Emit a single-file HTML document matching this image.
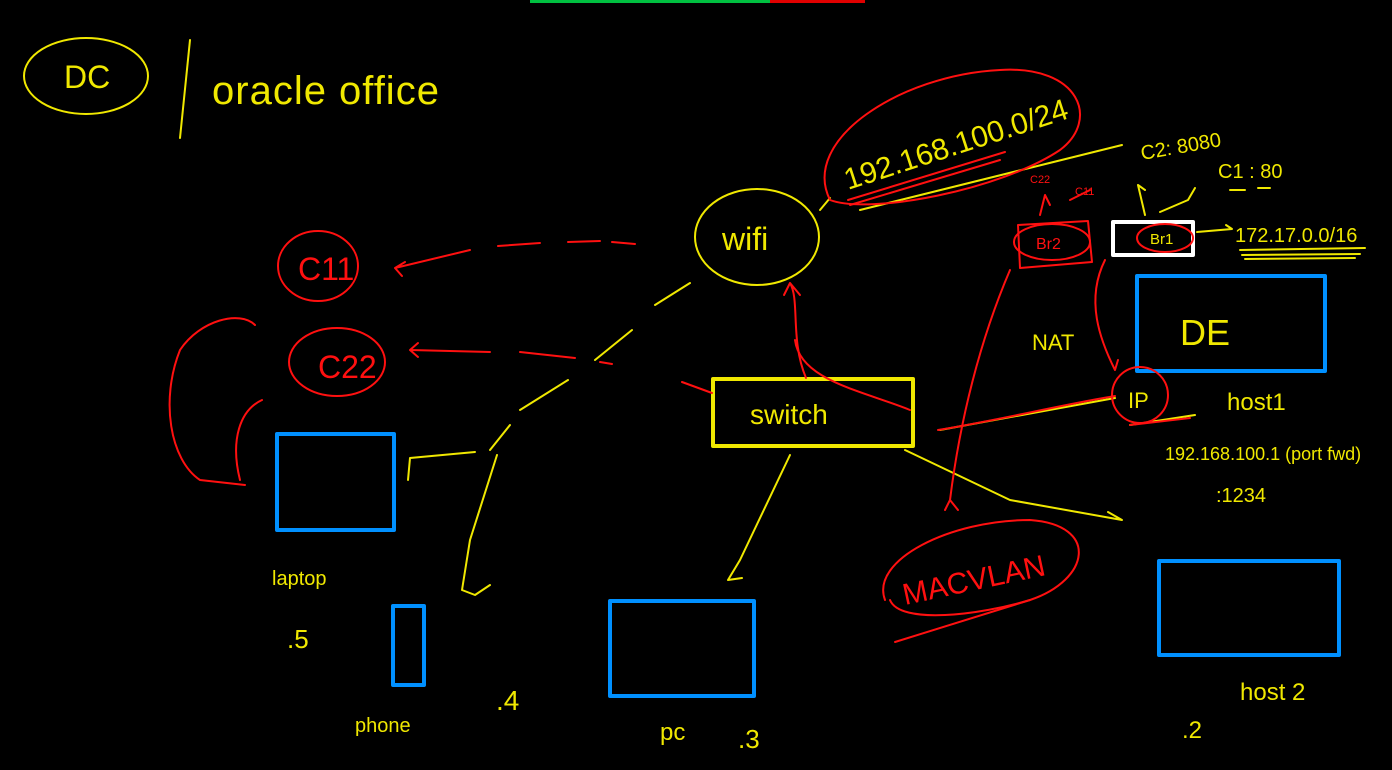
<!DOCTYPE html>
<html><head><meta charset="utf-8"><style>
html,body{margin:0;padding:0;background:#000;width:1392px;height:770px;overflow:hidden}
svg{display:block}
text{font-family:"Liberation Sans",sans-serif}
</style></head><body>
<svg width="1392" height="770" viewBox="0 0 1392 770" xmlns="http://www.w3.org/2000/svg">
<rect width="1392" height="770" fill="#000"/>
<rect x="530" y="0" width="240" height="3" fill="#00c040"/>
<rect x="770" y="0" width="95" height="3" fill="#e00000"/>

<g fill="none" stroke-linecap="round" stroke-linejoin="round">
<g stroke="#f0e800" stroke-width="2">
<ellipse cx="86" cy="76" rx="62" ry="38"/>
<path d="M190 40 L180 138"/>
<ellipse cx="757" cy="237" rx="62" ry="48"/>
<path d="M820 210 L830 198"/>
<path d="M860 210 L1122 145"/>
<path d="M690 283 L655 305 M632 330 L595 360 M568 380 L520 410 M510 425 L490 450"/>
<path d="M475 452 L410 458 L408 480"/>
<path d="M497 455 L470 540 L462 590 L475 595 L490 585"/>
<path d="M790 455 L740 560 L728 580 L742 578"/>
<path d="M905 450 L1010 500 L1122 520 L1108 512"/>
<path d="M940 430 L1115 398"/>
<path d="M1130 425 L1195 415"/>
<path d="M1240 250 L1365 248 M1242 255 L1360 254 M1245 259 L1355 258"/>
<path d="M1197 232 L1232 229 L1226 225"/>
<path d="M1145 215 L1138 185 L1145 190 M1160 212 L1188 200 L1195 188"/>
<path d="M1230 190 L1245 190 M1258 188 L1270 188"/>
</g>
<g stroke="#f0e800" stroke-width="4">
<rect x="713" y="379" width="200" height="67"/>
</g>
<g stroke="#ffffff" stroke-width="4">
<rect x="1113" y="222" width="80" height="33"/>
</g>
<g stroke="#0090ff" stroke-width="4">
<rect x="277" y="434" width="117" height="96"/>
<rect x="393" y="606" width="31" height="79"/>
<rect x="610" y="601" width="144" height="95"/>
<rect x="1137" y="276" width="188" height="95"/>
<rect x="1159" y="561" width="180" height="94"/>
</g>
<g stroke="#ff1010" stroke-width="2">
<path d="M830 200 C800 140 900 75 1000 70 C1080 65 1100 120 1060 150 C1000 190 870 215 830 200"/>
<path d="M848 200 L1005 152 M850 205 L1000 160"/>
<ellipse cx="318" cy="266" rx="40" ry="35"/>
<ellipse cx="337" cy="362" rx="48" ry="34"/>
<path d="M498 246 L540 243 M568 242 L600 241 M612 242 L635 244"/>
<path d="M470 250 L395 268 L405 262 M395 268 L402 276"/>
<path d="M490 352 L410 350 L418 343 M410 350 L418 357"/>
<path d="M520 352 L575 358 M600 362 L612 364 M682 382 L712 393"/>
<path d="M255 325 C240 310 200 320 180 350 C160 400 170 460 200 480 L245 485"/>
<path d="M262 400 C240 410 230 440 240 480"/>
<path d="M806 378 C790 340 800 300 790 283 L784 295 M790 283 L800 295"/>
<path d="M910 410 C860 390 800 380 795 340"/>
<path d="M1018 225 L1088 221 L1092 262 L1020 268 Z"/>
<ellipse cx="1052" cy="242" rx="38" ry="18"/>
<ellipse cx="1165" cy="238" rx="28" ry="14"/>
<path d="M1010 270 C980 340 960 420 950 500 L945 510 M950 500 L958 510"/>
<path d="M1105 260 C1085 300 1100 340 1115 370 L1118 360"/>
<ellipse cx="1140" cy="395" rx="28" ry="28"/>
<path d="M1130 425 L1190 418"/>
<path d="M938 430 C1000 420 1060 405 1115 396"/>
<path d="M1040 215 L1045 195 L1050 205"/>
<path d="M1070 200 L1090 190"/>
<path d="M885 600 C870 560 950 520 1030 520 C1100 525 1090 580 1030 600 C980 615 900 625 890 600"/>
<path d="M895 642 L1030 600"/>
</g>
</g>

<g fill="#f0e800" font-size="34">
<text x="64" y="88" font-size="32">DC</text>
<text x="212" y="104" font-size="40" letter-spacing="1">oracle office</text>
<text x="722" y="250" font-size="32">wifi</text>
<text x="750" y="424" font-size="28">switch</text>
<text x="848" y="190" font-size="30" transform="rotate(-18 848 190)">192.168.100.0/24</text>
<text x="1142" y="160" font-size="20" transform="rotate(-10 1142 160)">C2: 8080</text>
<text x="1218" y="178" font-size="20">C1 : 80</text>
<text x="1235" y="242" font-size="20">172.17.0.0/16</text>
<text x="1180" y="345" font-size="36">DE</text>
<text x="1032" y="350" font-size="22">NAT</text>
<text x="1227" y="410" font-size="24">host1</text>
<text x="1165" y="460" font-size="18">192.168.100.1 (port fwd)</text>
<text x="1216" y="502" font-size="20">:1234</text>
<text x="272" y="585" font-size="20">laptop</text>
<text x="287" y="648" font-size="26">.5</text>
<text x="355" y="732" font-size="20">phone</text>
<text x="496" y="710" font-size="28">.4</text>
<text x="660" y="740" font-size="24">pc</text>
<text x="738" y="748" font-size="26">.3</text>
<text x="1240" y="700" font-size="24">host 2</text>
<text x="1182" y="738" font-size="24">.2</text>
<text x="1150" y="244" font-size="15">Br1</text>
<text x="1128" y="408" font-size="22">IP</text>
</g>
<g fill="#ff1010">
<text x="298" y="280" font-size="32">C11</text>
<text x="318" y="378" font-size="32">C22</text>
<text x="1036" y="249" font-size="16">Br2</text>
<text x="1030" y="183" font-size="11">C22</text>
<text x="1075" y="195" font-size="11">C11</text>
<text x="905" y="605" font-size="30" transform="rotate(-12 905 605)">MACVLAN</text>
</g>
</svg>
</body></html>
